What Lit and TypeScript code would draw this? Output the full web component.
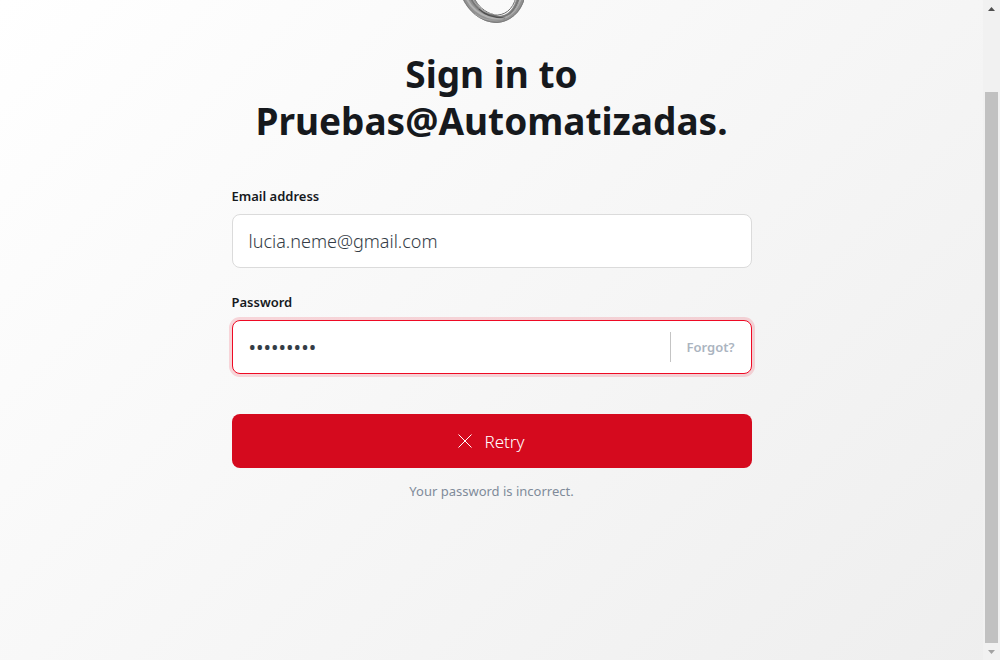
import { LitElement, html, css } from "lit";
import { customElement, property } from "lit/decorators.js";

@customElement("ring-logo")
class RingLogo extends LitElement {
  static styles = css`
    :host {
      display: block;
      width: 64px;
      height: 24px;
    }
    svg {
      display: block;
    }
  `;

  render() {
    return html`
      <svg width="64" height="24" viewBox="-1 40 64 24" fill="none" aria-hidden="true">
        <path d="M0 36 C5 47 9 50 16 56 C23 61 29 63 36 63 C49 62 60 53 64 38 L56 36 C53 50 46 56 37 56 C24 54 17 48 12 36Z" fill="#929292" />
        <path d="M2 38 C7 50 18 62 36 62.500 C49 61.500 59 53 63.500 38" stroke="#7c7c7c" />
        <path d="M5 37 C10 49 18 54 27 57 C40 61 53 58 60 38" stroke="#b2b2b2" stroke-width="2" />
        <path d="M9 36 C15 51 26 54 38 57 C48 57 55 49 58 37" stroke="#777777" stroke-width="2" />
        <path d="M13 37 C16 46 24 52 33 55 C43 56 52 50 55 37" stroke="#6c6c6c" />
        <path d="M18 49 C24 55 32 58 44 58" stroke="#505050" stroke-width="1.200" />
        <path d="M14 54 C22 60 32 62 43 58 C51 55 55 50 58 42" stroke="#a4a4a4" />
        <path d="M11 38 C16 47 22 53 32 54" stroke="#a8a8a8" />
      </svg>
    `;
  }
}

@customElement("page-scrollbar")
class PageScrollbar extends LitElement {
  static styles = css`
    :host {
      display: grid;
      grid-template-rows: 17px 75fr 551fr 17px;
      box-sizing: border-box;
      width: 17px;
      padding: 0 2px;
      background: #f1f1f1;
    }
    .arrow {
      display: block;
      place-self: center;
    }
    .thumb {
      grid-row: 3;
      background: #c1c1c1;
    }
    .down {
      grid-row: 4;
    }
  `;

  render() {
    return html`
      <svg class="arrow" width="7" height="4" viewBox="0 0 7 4" aria-hidden="true">
        <path d="M0 4 L3.500 0 L7 4Z" fill="#505050" />
      </svg>
      <div class="thumb"></div>
      <svg class="arrow down" width="7" height="4" viewBox="0 0 7 4" aria-hidden="true">
        <path d="M0 0 L3.500 4 L7 0Z" fill="#a3a3a3" />
      </svg>
    `;
  }
}

@customElement("app-root")
class AppRoot extends LitElement {
  @property() team = "Pruebas@Automatizadas";
  @property() email = "lucia.neme@gmail.com";
  @property() error = "Your password is incorrect.";

  static styles = css`
    :host {
      display: grid;
      grid-template-columns: 1fr auto;
      min-height: 100vh;
      font-family: "Segoe UI", "Noto Sans", "Open Sans", sans-serif;
      color: #16191d;
      background: linear-gradient(135deg, #ffffff 0%, #eeeeee 100%);
    }
    main {
      display: flex;
      flex-direction: column;
      align-items: center;
    }
    h1 {
      margin: 26px 0 0;
      max-width: 520px;
      font-size: 37px;
      font-weight: 700;
      line-height: 47px;
      text-align: center;
    }
    form {
      display: flex;
      flex-direction: column;
      box-sizing: border-box;
      width: 100%;
      max-width: 520px;
      margin-top: 42px;
    }
    .label {
      margin-bottom: 8px;
      font-size: 13px;
      font-weight: 600;
      line-height: 20px;
    }
    .field {
      display: flex;
      align-items: center;
      box-sizing: border-box;
      height: 54px;
      margin-bottom: 24px;
      border: 1px solid #dbdbdb;
      border-radius: 8px;
      background: #ffffff;
    }
    .field.invalid {
      margin-bottom: 40px;
      border-color: #ee0a24;
      box-shadow: 0 0 0 3px rgba(238, 10, 36, 0.15);
    }
    .input {
      flex: 1;
      min-width: 0;
      height: 100%;
      box-sizing: border-box;
      padding: 0 16px;
      border: 0;
      outline: 0;
      background: transparent;
      font-family: inherit;
      font-size: 18px;
      font-weight: 300;
      color: #343c46;
    }
    .input.secret {
      font-size: 20px;
      font-weight: 400;
    }
    .forgot {
      padding: 0 16px;
      border-left: 1px solid #c4c4c4;
      font-size: 13px;
      font-weight: 600;
      line-height: 30px;
      color: #abb4c0;
      text-decoration: none;
    }
    .retry {
      display: flex;
      align-items: center;
      justify-content: center;
      gap: 12px;
      height: 54px;
      padding: 0;
      border: 0;
      border-radius: 8px;
      background: #d50a1e;
      font-family: inherit;
      font-size: 17px;
      font-weight: 300;
      color: #ffffff;
    }
    .message {
      margin: 13px 0 0;
      font-size: 13px;
      line-height: 20px;
      text-align: center;
      color: #808b9a;
    }
  `;

  render() {
    return html`
      <main>
        <ring-logo></ring-logo>
        <h1>Sign in to<br />${this.team}.</h1>
        <form @submit=${(e: Event) => e.preventDefault()}>
          <label class="label" for="email">Email address</label>
          <div class="field">
            <input class="input" id="email" type="email" .value=${this.email} />
          </div>
          <label class="label" for="password">Password</label>
          <div class="field invalid">
            <input class="input secret" id="password" type="password" aria-invalid="true" aria-describedby="error" value="password1" />
            <a class="forgot" href="#forgot">Forgot?</a>
          </div>
          <button class="retry" type="submit">
            <svg width="14" height="14" viewBox="0 0 14 14" fill="none" stroke="#ffffff" aria-hidden="true">
              <path d="M0.500 0.500 L13.500 13.500 M13.500 0.500 L0.500 13.500" />
            </svg>
            Retry
          </button>
          <p class="message" id="error" role="alert">${this.error}</p>
        </form>
      </main>
      <page-scrollbar></page-scrollbar>
    `;
  }
}
